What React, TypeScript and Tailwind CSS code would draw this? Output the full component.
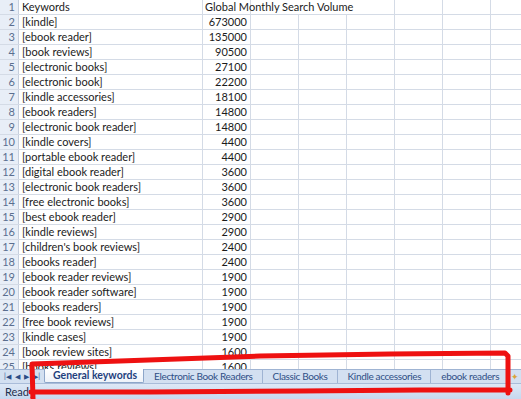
import type { FC } from 'react';

const rows: [string, string][] = [
  ['Keywords', 'Global Monthly Search Volume'],
  ['[kindle]', '673000'],
  ['[ebook reader]', '135000'],
  ['[book reviews]', '90500'],
  ['[electronic books]', '27100'],
  ['[electronic book]', '22200'],
  ['[kindle accessories]', '18100'],
  ['[ebook readers]', '14800'],
  ['[electronic book reader]', '14800'],
  ['[kindle covers]', '4400'],
  ['[portable ebook reader]', '4400'],
  ['[digital ebook reader]', '3600'],
  ['[electronic book readers]', '3600'],
  ['[free electronic books]', '3600'],
  ['[best ebook reader]', '2900'],
  ['[kindle reviews]', '2900'],
  ["[children's book reviews]", '2400'],
  ['[ebooks reader]', '2400'],
  ['[ebook reader reviews]', '1900'],
  ['[ebook reader software]', '1900'],
  ['[ebooks readers]', '1900'],
  ['[free book reviews]', '1900'],
  ['[kindle cases]', '1900'],
  ['[book review sites]', '1600'],
  ['[books reviews]', '1600'],
];

const tabs = ['Electronic Book Readers', 'Classic Books', 'Kindle accessories', 'ebook readers'];

const font = { fontFamily: 'Lato, "Open Sans", sans-serif' };

const Row: FC<{ n: number; a: string; b: string }> = ({ n, a, b }) => {
  const header = n === 1;
  return (
    <div className="flex h-[15px] shrink-0 border-b border-[#d4dbe6]">
      <div className="w-[19px] shrink-0 bg-[#e8eef7] border-r border-[#c5cfdd] text-right pr-[3px] text-[11px] leading-[14px] text-[#5a6e8f]">{n}</div>
      <div className="w-[184px] shrink-0 border-r border-[#d4dbe6] pl-[3px] text-[11px] leading-[14px] text-[#1b1b1b] whitespace-nowrap">{a}</div>
      <div className={`w-[48px] shrink-0 border-r border-[#d4dbe6] text-[11px] leading-[14px] text-[#1b1b1b] whitespace-nowrap ${header ? 'pl-[2px] overflow-visible relative z-10' : 'text-right pr-[3px]'}`}>{b}</div>
      {[0, 1, 2, 3, 4, 5].map((i) => (
        <div key={i} className={`w-[48px] shrink-0 border-r ${header && i < 2 ? 'border-transparent' : 'border-[#d4dbe6]'}`} />
      ))}
    </div>
  );
};

const App: FC = () => {
  return (
    <div className="relative w-[521px] h-[399px] overflow-hidden bg-white flex flex-col" style={font}>
      <div className="h-[369px] shrink-0 overflow-hidden flex flex-col">
        {rows.map(([a, b], i) => (
          <Row key={i} n={i + 1} a={a} b={b} />
        ))}
      </div>

      <div className="h-[14px] shrink-0 flex items-stretch bg-[#d3e0f1] border-t border-[#9fb4d3]">
        <div className="w-[44px] shrink-0 flex items-center justify-around px-[2px] text-[7px] text-[#2a4c86]">
          <span>|◀</span>
          <span>◀</span>
          <span>▶</span>
          <span>▶|</span>
        </div>
        <div className="flex items-stretch -mt-px whitespace-nowrap">
          <div className="flex items-center pl-[8px] pr-[6px] bg-gradient-to-b from-white to-[#eef3fa] border-l border-r border-b border-[#8da6c9] rounded-b-[2px] text-[10.5px] font-bold text-[#1f3f7d]">
            General keywords
          </div>
          {tabs.map((t) => (
            <div key={t} className="flex items-center pl-[10px] pr-[9px] border-r border-[#9fb4d3] text-[10px] tracking-[-0.35px] text-[#2f4f86]">
              {t}
            </div>
          ))}
        </div>
        <div className="ml-auto w-[10px] flex items-center text-[9px] text-[#d9a53a]">✦</div>
      </div>

      <div className="flex-1 flex items-center pl-[5px] bg-gradient-to-b from-[#dde8f6] to-[#c4d6ee] border-t border-[#a9bcd9] text-[11px] text-[#1e2f4d]">
        Ready
      </div>

      <svg className="absolute inset-0 pointer-events-none" width="521" height="399" viewBox="0 0 521 399">
        <path
          d="M33 399 L32 364 L120 361 L260 356 L390 354 L505 353 L508 356 L508 393 M31 392 L150 392 L300 391 L420 390 L510 390"
          fill="none"
          stroke="#ee1111"
          strokeWidth="5"
          strokeLinecap="round"
          strokeLinejoin="round"
        />
      </svg>
    </div>
  );
};

export default App;
